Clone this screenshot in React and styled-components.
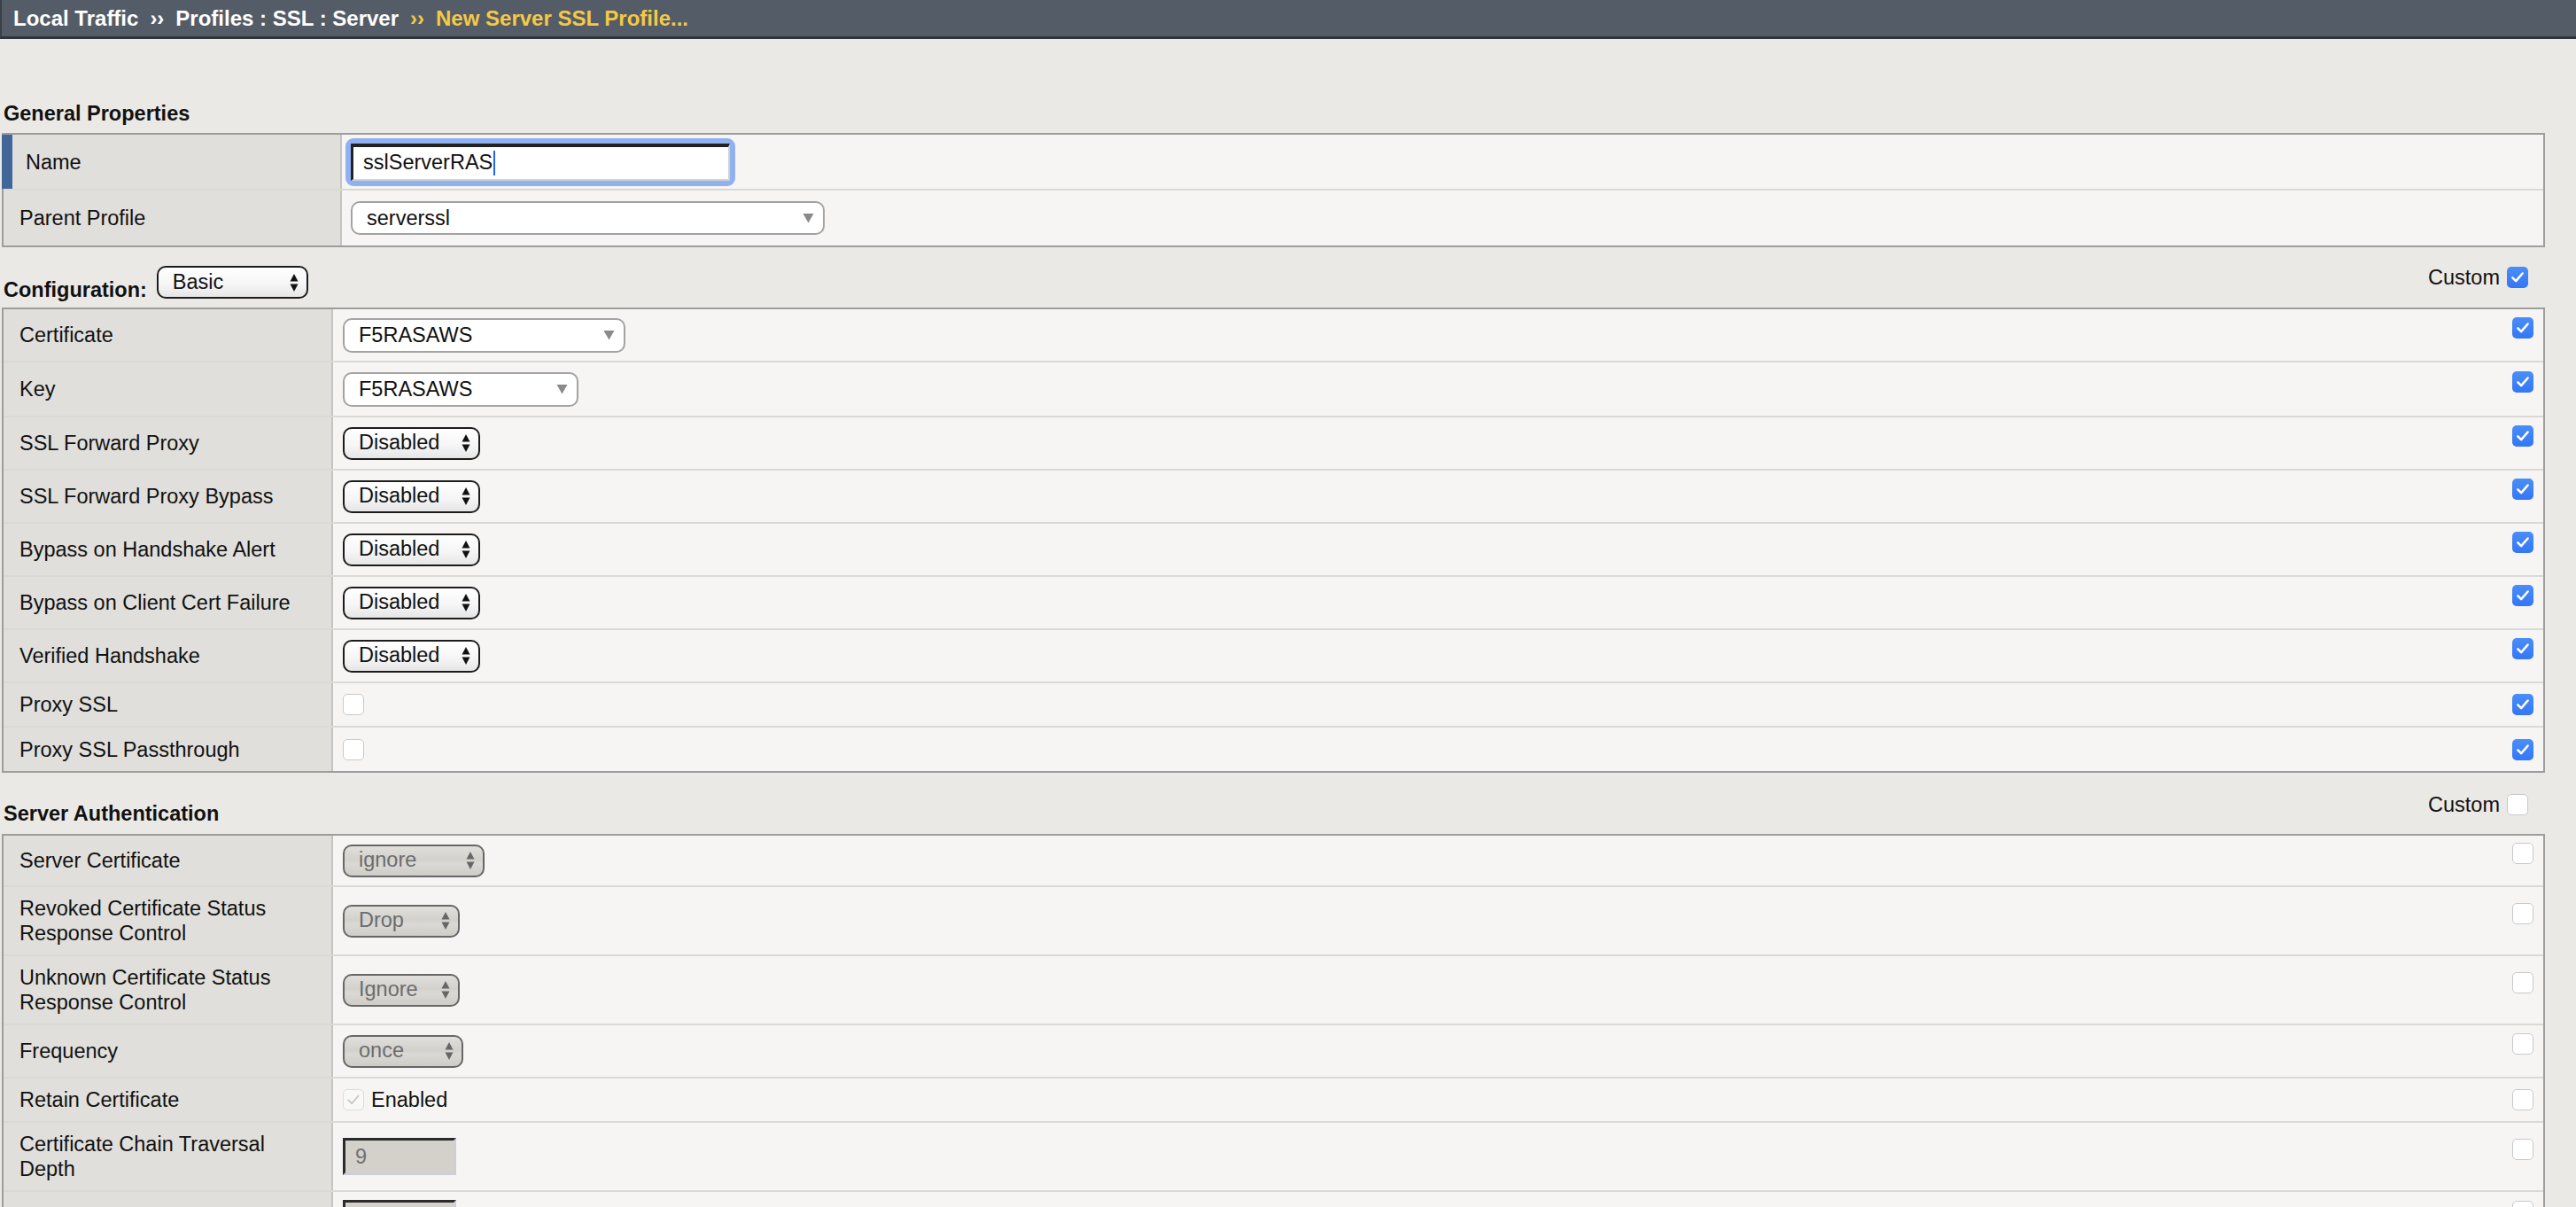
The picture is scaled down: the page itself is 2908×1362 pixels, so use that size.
import React from "react";
import styled, { createGlobalStyle } from "styled-components";

const GlobalStyle = createGlobalStyle`
  html, body {
    margin: 0;
    padding: 0;
    overflow: hidden;
  }
  body {
    background: #ebe9e5;
    font-family: "Liberation Sans", Arial, Helvetica, sans-serif;
    font-size: 23.5px;
    color: #111;
  }
  * {
    box-sizing: border-box;
  }
`;

const Header = styled.div`
  height: 44px;
  background: #545c67;
  border-bottom: 3px solid #30353b;
  border-left: 2px solid #3a4047;
  display: flex;
  align-items: center;
  padding-left: 13px;
  font-weight: bold;
  font-size: 24px;
  color: #fff;
  white-space: nowrap;
`;

const Crumb = styled.span`
  color: ${(p) => (p.current ? "#f5c944" : "#fff")};
`;

const CrumbSep = styled.span`
  margin: 0 13px;
  color: ${(p) => (p.current ? "#f5c944" : "#fff")};
`;

const Content = styled.div`
  padding: 0 35px 0 2px;
`;

const SectionTitle = styled.div`
  margin: 70px 0 8px;
  padding-left: 2px;
  line-height: 28px;
  font-weight: bold;
`;

const Bar = styled.div`
  display: flex;
  justify-content: space-between;
  height: 36px;
  margin: ${(p) => p.top}px 0 ${(p) => p.bottom}px;
`;

const BarTitle = styled.div`
  display: flex;
  align-items: flex-end;
  gap: 11px;
  padding-left: 2px;
  font-weight: bold;
  line-height: 28px;
`;

const BarText = styled.span`
  margin-bottom: ${(p) => p.drop || 0}px;
`;

const CustomToggle = styled.label`
  display: flex;
  align-items: flex-start;
  gap: 8px;
  padding-right: 19px;
  line-height: 24px;
`;

const Table = styled.div`
  border: 2px solid #9d9d9d;
  background: #f6f5f3;
`;

const Row = styled.div`
  box-sizing: content-box;
  display: flex;
  min-height: ${(p) => p.h}px;
  & + & {
    border-top: 2px solid #d9d9d6;
  }
`;

const Label = styled.div`
  flex: 0 0 ${(p) => p.w}px;
  display: flex;
  align-items: center;
  padding: 0 24px 0 ${(p) => (p.required ? 15 : 18)}px;
  line-height: 28px;
  background: #e0dfdb;
  border-right: 2px solid #c4c4c2;
  ${(p) =>
    p.required &&
    `
    margin-left: -2px;
    flex-basis: ${p.w + 2}px;
    border-left: 12px solid #41679a;
  `}
`;

const Value = styled.div`
  flex: 1;
  display: flex;
  align-items: center;
  gap: 8px;
  padding-left: ${(p) => p.pad || 11}px;
`;

const CustomCell = styled.div`
  flex: 0 0 35px;
  display: flex;
  align-items: center;
  padding-bottom: ${(p) => (p.lift ? 16 : 0)}px;
`;

const FocusRing = styled.span`
  display: inline-flex;
  margin-left: -6px;
  padding: 6px;
  border-radius: 9px;
  background: #8fb0f1;
`;

const NameField = styled.span`
  display: flex;
  align-items: center;
  width: 428px;
  height: 42px;
  padding-left: 11px;
  background: #fff;
  border-top: 4px solid #222;
  border-left: 3px solid #222;
  border-right: 2px solid #d3d3d3;
  border-bottom: 2px solid #d3d3d3;
`;

const Caret = styled.span`
  display: inline-block;
  width: 2px;
  height: 28px;
  margin-left: 1px;
  background: #2563eb;
`;

const ComboSelect = styled.div`
  width: ${(p) => p.w}px;
  height: ${(p) => p.h || 39}px;
  display: flex;
  align-items: center;
  justify-content: space-between;
  padding: 0 10px 0 16px;
  background: #fff;
  border: 2px solid #a3a3a3;
  border-radius: 10px;
`;

const StepSelect = styled.div`
  width: ${(p) => p.w}px;
  height: 37px;
  display: flex;
  align-items: center;
  justify-content: space-between;
  padding: 0 9px 0 16px;
  border: 2px solid ${(p) => (p.disabled ? "#676767" : "#1c1c1c")};
  border-radius: 10px;
  color: ${(p) => (p.disabled ? "#6c6c6c" : "#111")};
  font-weight: normal;
  line-height: 1;
  background: ${(p) =>
    p.disabled
      ? "linear-gradient(#e0dfdb, #d2d1cc 45%, #dad9d5 60%, #cdccc7)"
      : "linear-gradient(#ffffff, #f6f6f6 55%, #e6e6e6)"};
`;

const BoxField = styled.div`
  width: 128px;
  height: 42px;
  display: flex;
  align-items: center;
  padding-left: 11px;
  color: #707070;
  background: #d4d1cb;
  border-top: 3px solid #2b2b2b;
  border-left: 3px solid #2b2b2b;
  border-right: 3px solid #cfcfd3;
  border-bottom: 3px solid #cfcfd3;
`;

const Box = styled.span`
  flex: 0 0 auto;
  display: inline-flex;
  align-items: center;
  justify-content: center;
  width: 24px;
  height: 24px;
  border-radius: 5px;
  background: ${(p) =>
    p.checked && !p.disabled
      ? "linear-gradient(#4a8ef8, #3476f5)"
      : p.disabled
      ? "#f8f8f7"
      : "#fff"};
  border: ${(p) =>
    p.checked && !p.disabled ? "none" : `1.5px solid ${p.disabled ? "#dcdcdc" : "#c9c9c9"}`};
`;

const Checkbox = ({ checked, disabled }) => (
  <Box checked={checked} disabled={disabled}>
    {checked && (
      <svg width="18" height="18" viewBox="0 0 24 24">
        <path
          d="M4.5 12.5l5 5L19.5 6"
          fill="none"
          stroke={disabled ? "#c6c6c6" : "#fff"}
          strokeWidth={disabled ? 2.4 : 3.4}
          strokeLinecap="round"
          strokeLinejoin="round"
        />
      </svg>
    )}
  </Box>
);

const DownArrow = () => (
  <svg width="13" height="12" viewBox="0 0 13 12">
    <path d="M0.5 1h12L6.5 11.5z" fill="#8a8a8a" />
  </svg>
);

const UpDown = ({ color }) => (
  <svg width="10" height="22" viewBox="0 0 10 22">
    <path d="M5 1L9.5 9.5h-9z" fill={color} />
    <path d="M5 21L9.5 12.5h-9z" fill={color} />
  </svg>
);

const Step = ({ w, disabled, children }) => (
  <StepSelect w={w} disabled={disabled}>
    <span>{children}</span>
    <UpDown color={disabled ? "#666" : "#111"} />
  </StepSelect>
);

const Combo = ({ w, h, children }) => (
  <ComboSelect w={w} h={h}>
    <span>{children}</span>
    <DownArrow />
  </ComboSelect>
);

const configRows = [
  { id: "cert", label: "Certificate", h: 58, control: <Combo w={319}>F5RASAWS</Combo> },
  { id: "key", label: "Key", h: 60, control: <Combo w={266}>F5RASAWS</Combo> },
  { id: "sfp", label: "SSL Forward Proxy", h: 58, control: <Step w={155}>Disabled</Step> },
  { id: "sfpb", label: "SSL Forward Proxy Bypass", h: 58, control: <Step w={155}>Disabled</Step> },
  { id: "bha", label: "Bypass on Handshake Alert", h: 58, control: <Step w={155}>Disabled</Step> },
  { id: "bccf", label: "Bypass on Client Cert Failure", h: 58, control: <Step w={155}>Disabled</Step> },
  { id: "vh", label: "Verified Handshake", h: 58, control: <Step w={155}>Disabled</Step> },
  { id: "ps", label: "Proxy SSL", h: 48, plain: true, control: <Checkbox /> },
  { id: "psp", label: "Proxy SSL Passthrough", h: 49, plain: true, control: <Checkbox /> },
];

const authRows = [
  { id: "sc", label: "Server Certificate", h: 56, control: <Step w={160} disabled>ignore</Step> },
  {
    id: "rcs",
    label: "Revoked Certificate Status Response Control",
    h: 76,
    control: <Step w={132} disabled>Drop</Step>,
  },
  {
    id: "ucs",
    label: "Unknown Certificate Status Response Control",
    h: 76,
    control: <Step w={132} disabled>Ignore</Step>,
  },
  { id: "freq", label: "Frequency", h: 58, control: <Step w={136} disabled>once</Step> },
  {
    id: "retain",
    label: "Retain Certificate",
    h: 48,
    plain: true,
    control: (
      <>
        <Checkbox checked disabled />
        <span>Enabled</span>
      </>
    ),
  },
  { id: "depth", label: "Certificate Chain Traversal Depth", h: 76, control: <BoxField>9</BoxField> },
  // next row is only partly in view; its label sits below the fold
  { id: "next", label: "", h: 60, control: <BoxField /> },
];

const SettingsTable = ({ rows, custom }) => (
  <Table>
    {rows.map((r) => (
      <Row key={r.id} h={r.h}>
        <Label w={372}>{r.label}</Label>
        <Value>{r.control}</Value>
        <CustomCell lift={!r.plain}>
          <Checkbox checked={custom} />
        </CustomCell>
      </Row>
    ))}
  </Table>
);

export default function App() {
  return (
    <>
      <GlobalStyle />
      <Header>
        <Crumb>Local Traffic</Crumb>
        <CrumbSep>››</CrumbSep>
        <Crumb>Profiles : SSL : Server</Crumb>
        <CrumbSep current>››</CrumbSep>
        <Crumb current>New Server SSL Profile...</Crumb>
      </Header>
      <Content>
        <SectionTitle>General Properties</SectionTitle>
        <Table>
          <Row h={61}>
            <Label w={382} required>
              Name
            </Label>
            <Value pad={10}>
              <FocusRing>
                <NameField>
                  sslServerRAS
                  <Caret />
                </NameField>
              </FocusRing>
            </Value>
          </Row>
          <Row h={62}>
            <Label w={382}>Parent Profile</Label>
            <Value pad={10}>
              <Combo w={535} h={38}>
                serverssl
              </Combo>
            </Value>
          </Row>
        </Table>

        <Bar top={22} bottom={10}>
          <BarTitle>
            <BarText drop={-4}>Configuration:</BarText>
            <Step w={171}>Basic</Step>
          </BarTitle>
          <CustomToggle>
            <span>Custom</span>
            <Checkbox checked />
          </CustomToggle>
        </Bar>
        <SettingsTable rows={configRows} custom />

        <Bar top={24} bottom={9}>
          <BarTitle>
            <BarText>Server Authentication</BarText>
          </BarTitle>
          <CustomToggle>
            <span>Custom</span>
            <Checkbox />
          </CustomToggle>
        </Bar>
        <SettingsTable rows={authRows} />
      </Content>
    </>
  );
}
